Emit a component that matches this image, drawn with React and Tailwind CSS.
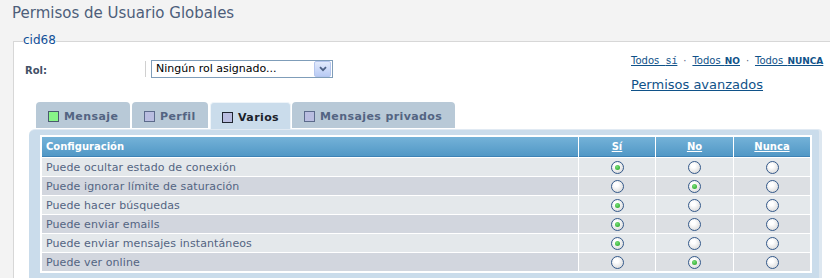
import React from "react";

const rows = [
  ["Puede ocultar estado de conexión", 0],
  ["Puede ignorar límite de saturación", 1],
  ["Puede hacer búsquedas", 0],
  ["Puede enviar emails", 0],
  ["Puede enviar mensajes instantáneos", 0],
  ["Puede ver online", 1],
];

function Radio({ checked }) {
  return (
    <span className="w-[13px] h-[13px] rounded-full border border-[#34598a] bg-[radial-gradient(circle_at_40%_35%,#ffffff_20%,#d0d0d0)] flex items-center justify-center">
      {checked && (
        <span className="w-[5px] h-[5px] rounded-full bg-[radial-gradient(circle_at_40%_35%,#7be07b,#1f9f1f)]" />
      )}
    </span>
  );
}

function Tab({ label, w, icon, active, border }) {
  return (
    <div
      className={
        active
          ? "h-[27px] rounded-t-[4px] border border-b-0 border-[#eef4f9] bg-[#cadceb] flex items-center pl-[11px] pt-[2px] text-[#1b1f2a]"
          : "h-[26px] mb-[1px] rounded-t-[4px] bg-[#b8c9d7] flex items-center pl-[12px] pt-[2px] text-[#536482]"
      }
      style={{ width: w }}
    >
      <span className={"w-[11px] h-[11px] border " + icon + " " + border} />
      <span className="ml-[5px] text-[11px] leading-[13px] font-bold tracking-[0.4px]">
        {label}
      </span>
    </div>
  );
}

export default function App() {
  return (
    <div className="w-[830px] h-[278px] overflow-hidden bg-[#f3f3f3] font-['DejaVu_Sans',Verdana,sans-serif]">
      <h1 className="pt-[4px] pl-[12px] text-[15px] leading-[18px] font-normal text-[#4d5e7a]">
        Permisos de Usuario Globales
      </h1>
      <fieldset className="ml-[13px] mt-[12px] w-[830px] min-w-0 border border-[#d7d7d7] bg-white pl-[11px] pr-0 pt-0 pb-0">
        <legend className="ml-[-2px] p-0 text-[12px] leading-[14px] text-[#115098]">
          <span className="relative -top-px">cid68</span>
        </legend>
        <div className="flex">
          <div className="w-[606px] pt-[12px] flex items-start">
            <div className="w-[121px] h-[16px] mt-[1px] border-r border-[#d0d0d0] pt-[4px] text-[10px] leading-[12px] font-bold text-[#425067]">
              Rol:
            </div>
            <div className="ml-[5px] w-[182px] h-[18px] border border-[#7f9db9] bg-white flex items-center justify-between">
              <span className="pl-[4px] text-[11px] leading-[14px] text-black">
                Ningún rol asignado...
              </span>
              <span className="w-[17px] h-[16px] mr-[1px] rounded-[2px] border border-[#b5c6ee] bg-gradient-to-b from-[#e2eafc] to-[#b9cbf4] flex items-center justify-center">
                <svg width="8" height="6" viewBox="0 0 8 6">
                  <path d="M1 1.2 L4 4.2 L7 1.2" fill="none" stroke="#4d6185" strokeWidth="1.8" />
                </svg>
              </span>
            </div>
          </div>
          <div className="pt-[7px] text-[#105289]">
            <div className="flex items-baseline text-[10px] leading-[12px] whitespace-nowrap">
              <a className="underline [word-spacing:3px]">
                Todos <span className="font-['Liberation_Mono',monospace]">sí</span>
              </a>
              <span className="w-[15px] text-center text-[#536482]">·</span>
              <a className="underline [word-spacing:1px]">
                Todos <span className="text-[9px] font-semibold">NO</span>
              </a>
              <span className="w-[15px] text-center text-[#536482]">·</span>
              <a className="underline [word-spacing:1px]">
                Todos <span className="text-[9px] font-semibold">NUNCA</span>
              </a>
            </div>
            <div className="mt-[9px] text-[13px] leading-[16px]">
              <a className="underline">Permisos avanzados</a>
            </div>
          </div>
        </div>
        <div className="mt-[9px] ml-[11px] flex items-end h-[27px]">
          <Tab label="Mensaje" w={94} icon="bg-[#88f588]" border="border-[#4a5a6e]" />
          <div className="w-[2px]" />
          <Tab label="Perfil" w={76} icon="bg-[#b9bde0]" border="border-[#5c6b8c]" />
          <div className="w-[2px]" />
          <Tab label="Varios" w={81} icon="bg-[#b9bde0]" border="border-[#1f2530]" active />
          <div className="w-[1px]" />
          <Tab label="Mensajes privados" w={163} icon="bg-[#b9bde0]" border="border-[#5c6b8c]" />
        </div>
        <div className="ml-[4px] w-[793px] rounded-tl-[6px] rounded-tr-[4px] bg-[#cadceb] border-t border-[#e1eaf3] border-r-[3px] border-r-[#dde7f0] pt-[5px] pl-[11px] pb-[5px]">
          <div className="w-[772px] bg-white p-[2px] grid grid-cols-[536px_76px_77px_76px] gap-[1px] text-[#536482]">
            <div className="h-[20px] bg-gradient-to-b from-[#74b2d8] to-[#5198c6] border-b border-[#3e82b5] pl-[4px] flex items-center text-[10px] font-bold text-white">
              Configuración
            </div>
            {["Sí", "No", "Nunca"].map((h) => (
              <div
                key={h}
                className="h-[20px] bg-gradient-to-b from-[#74b2d8] to-[#5198c6] border-b border-[#3e82b5] flex items-center justify-center text-[10px] font-bold text-white"
              >
                <span className="underline">{h}</span>
              </div>
            ))}
            {rows.map(([label, v], i) => {
              const even = i % 2 === 1;
              const cell = even ? "bg-[#dcdfe3]" : "bg-[#e4e8eb]";
              return (
                <React.Fragment key={label}>
                  <div
                    className={
                      "h-[18px] pl-[4px] flex items-center text-[11px] leading-[13px] tracking-[0.1px] " +
                      (even ? "bg-[#d2d6de]" : "bg-[#e4e8eb]")
                    }
                  >
                    {label}
                  </div>
                  {[0, 1, 2].map((c) => (
                    <div key={c} className={"h-[18px] flex items-center justify-center " + cell}>
                      <Radio checked={v === c} />
                    </div>
                  ))}
                </React.Fragment>
              );
            })}
          </div>
        </div>
      </fieldset>
    </div>
  );
}
